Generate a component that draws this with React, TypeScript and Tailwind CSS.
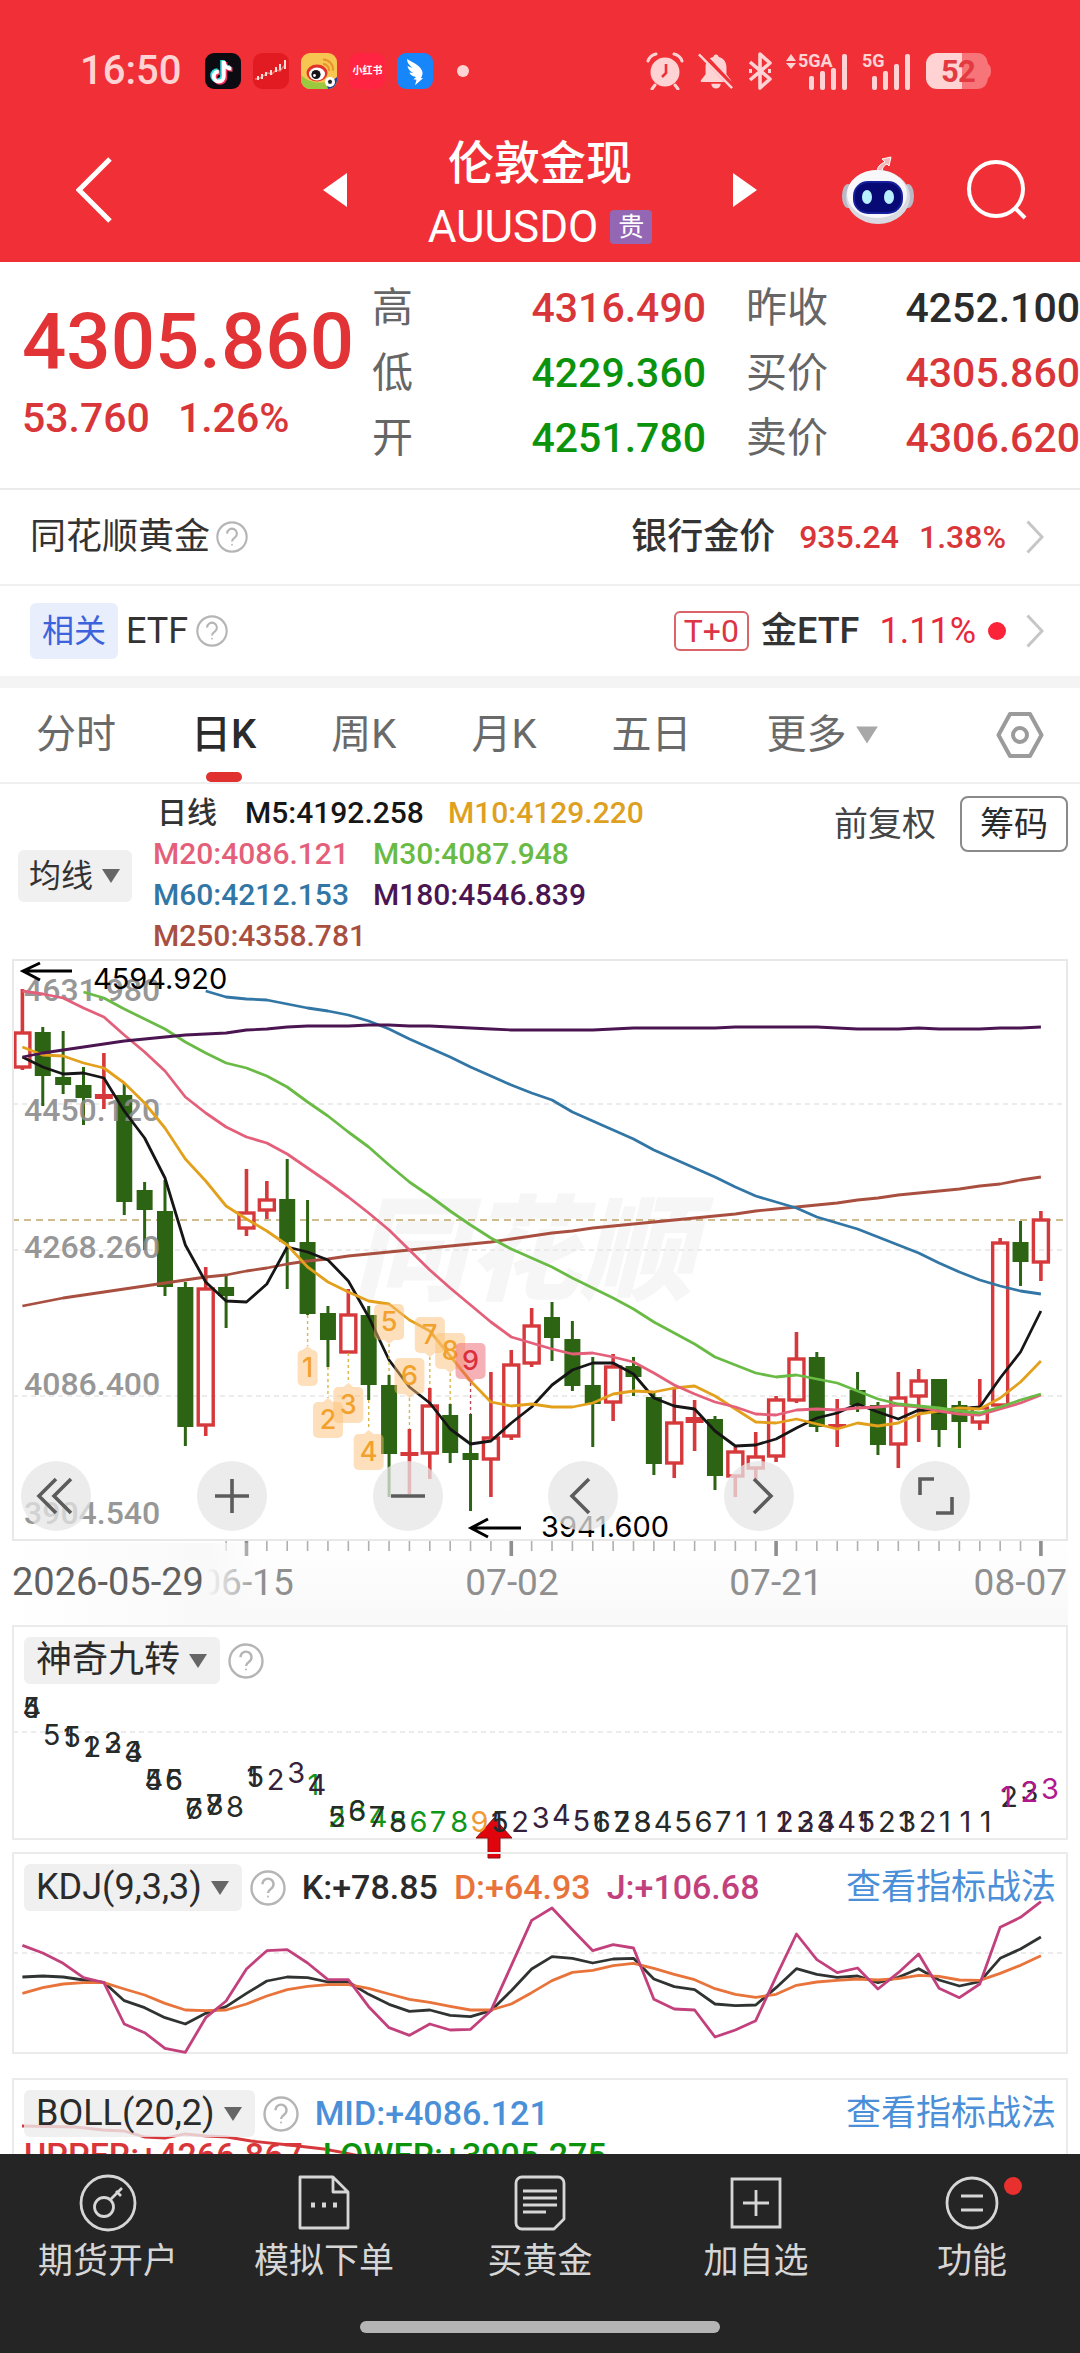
import type { ReactNode } from 'react';

type Candle = [kind: 'up' | 'down', top: number, bottom: number, high: number, low: number];

const UP = '#d6393c';
const DOWN = '#2d6413';
const MUTED = '#8f8f8f';

const QUOTES = [
  { label: '高', value: '4316.490', color: 'text-[#d9363a]' },
  { label: '昨收', value: '4252.100', color: 'text-[#2b2b2b]' },
  { label: '低', value: '4229.360', color: 'text-[#0c930c]' },
  { label: '买价', value: '4305.860', color: 'text-[#d9363a]' },
  { label: '开', value: '4251.780', color: 'text-[#0c930c]' },
  { label: '卖价', value: '4306.620', color: 'text-[#d9363a]' },
];

const TABS = ['分时', '日K', '周K', '月K', '五日', '更多'];

const MA_ROWS = [
  [
    { text: '日线', color: 'px-1 text-[#333333]' },
    { text: 'M5:4192.258', color: 'text-[#161616]' },
    { text: 'M10:4129.220', color: 'text-[#dea11f]' },
  ],
  [
    { text: 'M20:4086.121', color: 'text-[#e4607a]' },
    { text: 'M30:4087.948', color: 'text-[#69bb45]' },
  ],
  [
    { text: 'M60:4212.153', color: 'text-[#3276a6]' },
    { text: 'M180:4546.839', color: 'text-[#4b1551]' },
  ],
  [{ text: 'M250:4358.781', color: 'text-[#a94f40]' }],
];

// Chart drawings share one 1080-wide grid, so every panel lines up on the same x.
const xAt = (i: number) => 22.4 + i * 20.37;

const CANDLES: Candle[] = [
  ['up', 1032, 1068, 989, 1070],
  ['down', 1032, 1076, 1027, 1106],
  ['down', 1077, 1085, 1031, 1094],
  ['down', 1085, 1098, 1067, 1125],
  ['up', 1094, 1099, 1053, 1109],
  ['down', 1095, 1202, 1083, 1215],
  ['down', 1190, 1210, 1182, 1250],
  ['down', 1211, 1287, 1180, 1296],
  ['down', 1287, 1427, 1282, 1446],
  ['up', 1288, 1426, 1267, 1436],
  ['down', 1287, 1296, 1276, 1328],
  ['up', 1212, 1229, 1169, 1236],
  ['up', 1199, 1211, 1181, 1219],
  ['down', 1199, 1242, 1159, 1289],
  ['down', 1242, 1314, 1200, 1315],
  ['down', 1313, 1340, 1306, 1367],
  ['up', 1314, 1353, 1289, 1353],
  ['down', 1315, 1385, 1306, 1400],
  ['down', 1385, 1454, 1375, 1497],
  ['up', 1452, 1456, 1429, 1494],
  ['up', 1405, 1454, 1388, 1479],
  ['down', 1415, 1453, 1404, 1463],
  ['down', 1453, 1460, 1414, 1511],
  ['up', 1437, 1460, 1372, 1497],
  ['up', 1364, 1437, 1350, 1440],
  ['up', 1325, 1364, 1308, 1367],
  ['down', 1317, 1338, 1302, 1361],
  ['down', 1339, 1386, 1321, 1391],
  ['down', 1385, 1404, 1357, 1447],
  ['up', 1366, 1403, 1354, 1421],
  ['down', 1366, 1377, 1357, 1396],
  ['down', 1397, 1464, 1393, 1475],
  ['up', 1422, 1464, 1387, 1478],
  ['up', 1417, 1423, 1400, 1451],
  ['down', 1419, 1476, 1416, 1490],
  ['up', 1451, 1477, 1447, 1497],
  ['up', 1456, 1469, 1432, 1479],
  ['up', 1399, 1457, 1396, 1462],
  ['up', 1358, 1401, 1332, 1403],
  ['down', 1357, 1427, 1352, 1432],
  ['up', 1424, 1427, 1399, 1447],
  ['down', 1390, 1405, 1372, 1412],
  ['down', 1405, 1445, 1402, 1455],
  ['up', 1397, 1445, 1372, 1468],
  ['up', 1380, 1397, 1369, 1442],
  ['down', 1379, 1430, 1379, 1447],
  ['down', 1405, 1422, 1401, 1448],
  ['up', 1407, 1423, 1379, 1430],
  ['up', 1242, 1406, 1238, 1406],
  ['down', 1242, 1262, 1221, 1286],
  ['up', 1219, 1263, 1211, 1281],
];

const M5 = [
  1057, 1067, 1074, 1073, 1078, 1111, 1138, 1178, 1245, 1282, 1301, 1302, 1284, 1247, 1252, 1260, 1281,
  1317, 1360, 1387, 1403, 1429, 1444, 1441, 1423, 1407, 1385, 1370, 1363, 1363, 1374, 1398, 1406, 1409,
  1431, 1446, 1445, 1439, 1428, 1418, 1413, 1404, 1412, 1419, 1410, 1412, 1409, 1407, 1378, 1352, 1311,
];
const M10 = [
  1047, 1055, 1056, 1063, 1068, 1083, 1103, 1128, 1159, 1181, 1206, 1219, 1231, 1245, 1267, 1282, 1292,
  1301, 1304, 1320, 1331, 1356, 1381, 1402, 1406, 1404, 1407, 1407, 1403, 1394, 1391, 1392, 1388, 1386,
  1396, 1409, 1422, 1423, 1419, 1424, 1429, 1423, 1426, 1423, 1414, 1411, 1408, 1409, 1398, 1382, 1361,
];
const M20 = [
  991, 994, 998, 1008, 1017, 1035, 1052, 1071, 1097, 1113, 1127, 1137, 1143, 1154, 1168, 1182, 1197,
  1213, 1230, 1250, 1270, 1288, 1305, 1322, 1337, 1343, 1349, 1354, 1353, 1357, 1362, 1373, 1385, 1394,
  1402, 1407, 1414, 1415, 1410, 1409, 1410, 1408, 1407, 1405, 1407, 1411, 1414, 1415, 1409, 1403, 1395,
];
const M30 = [
  992, 998, 1009, 1019, 1029, 1042, 1053, 1063, 1068, 1076, 1087, 1102, 1116, 1132, 1147, 1165, 1182,
  1196, 1211, 1225, 1238, 1249, 1258, 1267, 1278, 1288, 1298, 1309, 1322, 1333, 1344, 1357, 1365, 1373,
  1377, 1375, 1379, 1383, 1391, 1399, 1404, 1406, 1408, 1411, 1413, 1407, 1400, 1394,
];
const M60 = [
  991, 997, 999, 1000, 1004, 1008, 1011, 1015, 1021, 1029, 1039, 1048, 1057, 1067, 1076, 1085, 1093,
  1100, 1112, 1121, 1130, 1139, 1150, 1159, 1168, 1177, 1187, 1196, 1202, 1208, 1217, 1223, 1229, 1237,
  1245, 1253, 1263, 1272, 1280, 1286, 1291, 1294,
];
const M180 = [
  1057, 1053, 1050, 1047, 1044, 1041, 1039, 1037, 1035, 1034, 1033, 1030, 1029, 1027, 1026, 1026, 1026,
  1025, 1025, 1026, 1026, 1027, 1028, 1029, 1030, 1030, 1030, 1030, 1030, 1029, 1028, 1028, 1028, 1028,
  1028, 1027, 1027, 1027, 1027, 1027, 1028, 1029, 1029, 1029, 1028, 1029, 1029, 1029, 1028, 1028, 1027,
];
const M250 = [
  1306, 1302, 1298, 1295, 1292, 1289, 1286, 1283, 1280, 1277, 1275, 1271, 1268, 1264, 1261, 1259, 1256,
  1254, 1252, 1250, 1248, 1246, 1244, 1242, 1239, 1236, 1233, 1231, 1228, 1226, 1224, 1222, 1220, 1218,
  1216, 1214, 1211, 1209, 1207, 1205, 1203, 1200, 1198, 1195, 1193, 1191, 1189, 1186, 1184, 1180, 1177,
];

const Y_LABELS = [
  { text: '4631.980', y: 1001 },
  { text: '4450.120', y: 1121 },
  { text: '4268.260', y: 1258 },
  { text: '4086.400', y: 1395 },
  { text: '3904.540', y: 1524 },
];

// Nine-turn tags: body top, and the candle end that the dotted leader reaches
const TURN_TAGS = [
  { n: 1, y: 1350, to: 1315, above: false },
  { n: 2, y: 1402, to: 1367, above: false },
  { n: 3, y: 1387, to: 1353, above: false },
  { n: 4, y: 1434, to: 1400, above: false },
  { n: 5, y: 1304, to: 1375, above: true },
  { n: 6, y: 1358, to: 1429, above: true },
  { n: 7, y: 1317, to: 1388, above: true },
  { n: 8, y: 1333, to: 1404, above: true },
  { n: 9, y: 1343, to: 1414, above: true },
];

const INK = '#262b28';
const PLUM = '#35223a';
const GREEN = '#109618';
const PINK = '#b3178f';

// [candle index, baseline, digit, colour]
const NINE_TURNS: [number, number, string, string][] = [
  [0, 1718, '5', INK], [0, 1718, '4', INK],
  [1, 1745, '5', INK],
  [2, 1747, '5', INK], [2, 1747, '1', INK],
  [3, 1757, '1', INK], [3, 1757, '2', INK],
  [4, 1753, '2', INK], [4, 1753, '3', INK],
  [5, 1762, '3', INK], [5, 1762, '4', INK],
  [6, 1790, '4', INK], [6, 1790, '5', INK],
  [7, 1790, '5', INK], [7, 1790, '6', INK],
  [8, 1819, '7', INK], [8, 1819, '6', INK],
  [9, 1815, '7', INK], [9, 1815, '8', INK],
  [10, 1817, '8', INK],
  [11, 1787, '1', PLUM], [11, 1787, '5', INK],
  [12, 1790, '2', PLUM],
  [13, 1783, '3', PLUM],
  [14, 1795, '1', GREEN], [14, 1795, '4', PLUM],
  [15, 1827, '2', GREEN], [15, 1827, '5', INK],
  [16, 1821, '3', GREEN], [16, 1821, '6', INK],
  [17, 1827, '4', GREEN], [17, 1827, '7', INK],
  [18, 1832, '5', GREEN], [18, 1832, '8', INK],
  [19, 1832, '6', GREEN],
  [20, 1832, '7', GREEN],
  [21, 1832, '8', GREEN],
  [22, 1832, '9', '#f09a37'],
  [23, 1832, '1', PLUM], [23, 1832, '5', INK],
  [24, 1832, '2', PLUM],
  [25, 1828, '3', PLUM],
  [26, 1825, '4', PLUM],
  [27, 1831, '5', PLUM],
  [28, 1832, '1', INK], [28, 1832, '6', INK],
  [29, 1832, '2', INK], [29, 1832, '7', INK],
  [30, 1832, '3', INK], [30, 1832, '8', INK],
  [31, 1832, '4', INK],
  [32, 1832, '5', INK],
  [33, 1832, '6', INK],
  [34, 1832, '7', INK],
  [35, 1832, '1', PLUM],
  [36, 1832, '1', INK],
  [37, 1832, '1', PLUM], [37, 1832, '2', PLUM],
  [38, 1832, '2', INK], [38, 1832, '3', PLUM],
  [39, 1832, '3', INK], [39, 1832, '4', PLUM],
  [40, 1832, '4', PLUM],
  [41, 1832, '1', INK], [41, 1832, '5', PLUM],
  [42, 1832, '2', INK],
  [43, 1832, '1', PLUM], [43, 1832, '3', INK],
  [44, 1832, '2', PLUM],
  [45, 1832, '1', INK],
  [46, 1832, '1', PLUM],
  [47, 1832, '1', INK],
  [48, 1807, '2', INK], [48, 1807, '1', PINK],
  [49, 1802, '3', INK], [49, 1802, '2', PINK],
  [50, 1799, '3', PINK],
];

const K_LINE = [
  396, 393, 396, 405, 412, 467, 488, 518, 537, 505, 485, 445, 408, 396, 398, 411, 411, 448, 478, 499, 495,
  511, 515, 497, 437, 372, 335, 340, 354, 342, 340, 402, 425, 434, 477, 482, 480, 428, 371, 388, 397, 393,
  413, 397, 371, 405, 423, 410, 340, 312, 276,
];
const D_LINE = [
  445, 428, 417, 413, 413, 432, 450, 475, 495, 497, 495, 477, 453, 434, 424, 419, 419, 430, 447, 463, 472,
  484, 495, 495, 477, 443, 407, 382, 376, 362, 355, 370, 388, 404, 431, 448, 457, 448, 421, 411, 406, 402,
  405, 401, 391, 394, 405, 406, 385, 361, 332,
];
const J_LINE = [
  301, 324, 355, 398, 413, 537, 563, 610, 622, 518, 468, 372, 317, 314, 354, 404, 404, 485, 548, 571, 537,
  555, 553, 497, 362, 226, 189, 254, 317, 299, 309, 463, 492, 495, 576, 555, 527, 395, 267, 344, 383, 369,
  432, 383, 327, 430, 458, 417, 247, 217, 170,
];

const toPoints = (ys: number[], start = 0) => ys.map((y, i) => `${xAt(i + start)},${y}`).join(' ');
const kdjPoints = (values: number[]) => toPoints(values.map((v) => 1845 + v / 3));

function Line({ ys, color, start = 0 }: { ys: number[]; color: string; start?: number }) {
  return <polyline points={toPoints(ys, start)} fill="none" stroke={color} strokeWidth="2.8" strokeLinejoin="round" />;
}

function HelpIcon({ size }: { size: 'sm' | 'md' }) {
  return (
    <button aria-label="说明" className="shrink-0">
      <svg viewBox="0 0 36 36" className={size === 'sm' ? 'size-8' : 'size-9'} fill="none" stroke="#b5b5b5" strokeWidth="2.4">
        <circle cx="18" cy="18" r="16.5" />
        <path d="M12.5 14.2a5.5 5.5 0 1 1 8.6 4.5c-2 1.4-3.1 2.4-3.1 4.3" />
        <circle cx="18" cy="26.6" r="1" fill="#b5b5b5" stroke="none" />
      </svg>
    </button>
  );
}

function Chevron() {
  return (
    <svg viewBox="0 0 18 34" className="h-[34px] w-[18px] shrink-0" fill="none" stroke="#c6c6c6" strokeWidth="3">
      <path d="M1.5 1.5 16 17 1.5 32.5" />
    </svg>
  );
}

function Caret({ color, large = false }: { color: string; large?: boolean }) {
  return (
    <svg viewBox="0 0 20 16" className={large ? 'h-5 w-6 shrink-0' : 'h-4 w-5 shrink-0'} fill={color}>
      <path d="M1 1h18L10 15z" />
    </svg>
  );
}

function StatusBar() {
  return (
    <div className="flex h-32 items-center pt-3.5 pr-[86px] pl-20 text-[#ffd3d3]">
      <span className="text-[40px] leading-10 font-medium">16:50</span>
      <div className="ml-6 flex items-center gap-3">
        <svg viewBox="0 0 36 36" className="size-9">
          <rect width="36" height="36" rx="9" fill="#0d0b12" />
          <g fill="none" strokeWidth="4.5">
            <path d="M17.5 7v15.500a5 5 0 1 1-5-5M17.500 8c.5 4 3.500 6.500 7.500 6.500" stroke="#35e0e4" />
            <path d="M20 9v15.500a5 5 0 1 1-5-5M20 10c.5 4 3.500 6.500 7.500 6.500" stroke="#f2335c" />
            <path d="M18.800 8v15.500a5 5 0 1 1-5-5M18.800 9c.5 4 3.500 6.500 7.500 6.500" stroke="#ffffff" strokeWidth="3.8" />
          </g>
        </svg>
        <svg viewBox="0 0 36 36" className="size-9" fill="none">
          <rect width="36" height="36" rx="9" fill="#e21b22" />
          <path d="M2 26l5-1 3-2 5-3 4 1 4-4 4 1 5-6" stroke="#f2766f" strokeWidth="1.4" />
          <path d="M5 23v4m4-6v5m4-7v4m5-6v5m5-8v5m4-8v6m5-10v9" stroke="#ffdcd8" strokeWidth="2" />
        </svg>
        <svg viewBox="0 0 36 36" className="size-9">
          <rect width="36" height="36" rx="9" fill="#f6c552" />
          <path d="M0 22c8 8 20 10 36 5a9 9 0 0 1-9 9H9a9 9 0 0 1-9-9z" fill="#9ac93f" />
          <ellipse cx="16" cy="20" rx="10.5" ry="8.5" fill="#e2322b" />
          <ellipse cx="16" cy="21" rx="8" ry="6.5" fill="#ffffff" />
          <circle cx="15" cy="21.5" r="4.6" fill="#161616" />
          <circle cx="13.5" cy="22.5" r="1.4" fill="#ffffff" />
          <path d="M22 11a6 6 0 0 1 6 7M22 6.500a10 10 0 0 1 10 11" fill="none" stroke="#e8912d" strokeWidth="2" />
          <path d="M27 36a9 9 0 0 0 9-9v-3l-10 8z" fill="#1f3fa0" />
          <circle cx="29" cy="29" r="5" fill="#ffffff" />
          <path d="M29 26.500l2.200 1.600-.8 2.600h-2.800l-.8-2.600z" fill="#222222" />
        </svg>
        <span className="flex size-9 items-center justify-center rounded-[9px] bg-[#ff2442] text-[10px] leading-3 font-bold text-white">
          小红书
        </span>
        <svg viewBox="0 0 36 36" className="size-9">
          <rect width="36" height="36" rx="9" fill="#1786fb" />
          <path d="M10 6c7 4 14 7 15.500 13 .3 2-.5 4-1.500 6l2 .2-8 7 1.500-5.500-3-.4 2.500-2.300c-4-.6-6-2.500-6.500-4.500l4 .6c-3.500-1.600-5.500-4-6-7l5 2C12 12 10 9.500 10 6z" fill="#ffffff" />
        </svg>
        <span className="ml-3 size-3 rounded-full bg-[#ffd3d3]" />
      </div>
      <div className="ml-auto flex items-center gap-3.5">
        <svg viewBox="0 0 38 38" className="size-[38px]" fill="none">
          <circle cx="19" cy="20" r="14.5" fill="#ffd3d3" />
          <path d="M2 9a11 11 0 0 1 8-7M36 9a11 11 0 0 0-8-7M9 33l-3 4M29 33l3 4" stroke="#ffd3d3" strokeWidth="3" strokeLinecap="round" />
          <path d="M20 12v9l-4 4" stroke="#f03036" strokeWidth="2.6" />
        </svg>
        <svg viewBox="0 0 38 38" className="size-9" fill="#ffd3d3">
          <path d="M19 1.500c1.600 0 2.600 1 2.800 2.600 5 1.200 8.200 5.400 8.200 10.400v8l5 6.500v1.500H3V29l5-6.500v-8c0-5 3.200-9.200 8.200-10.400.2-1.600 1.200-2.600 2.800-2.600zM14 32.500h10a5 5 0 0 1-10 0z" />
          <path d="M3 0 37 36" stroke="#f03036" strokeWidth="6" />
          <path d="M1 1.500 36 37" stroke="#ffd3d3" strokeWidth="2.6" />
        </svg>
        <svg viewBox="0 0 24 38" className="h-[38px] w-6" fill="none" stroke="#ffd3d3" strokeWidth="3.6">
          <path d="M2 10l20 17-10 9V2l10 9L2 28" strokeLinejoin="round" />
          <path d="M1 19h3M20 19h3" strokeWidth="4" />
        </svg>
        <svg viewBox="0 0 62 38" className="h-[38px] w-[62px]" fill="#ffd3d3">
          <path d="M0 9l5-7 5 7zM0 11l5 6 5-6z" />
          <text x="12" y="15" fontSize="18" fontWeight="700">5GA</text>
          <rect x="23" y="24" width="5" height="14" rx="2" />
          <rect x="34" y="19" width="5" height="19" rx="2" />
          <rect x="45" y="16" width="5" height="22" rx="2" />
          <rect x="56" y="2" width="5" height="36" rx="2" />
        </svg>
        <svg viewBox="0 0 50 38" className="h-[38px] w-[50px]" fill="#ffd3d3">
          <text x="0" y="15" fontSize="18" fontWeight="700">5G</text>
          <rect x="10" y="24" width="5" height="14" rx="2" />
          <rect x="21" y="19" width="5" height="19" rx="2" />
          <rect x="32" y="12" width="5" height="26" rx="2" />
          <rect x="43" y="2" width="5" height="36" rx="2" />
        </svg>
        <svg viewBox="0 0 68 36" className="h-9 w-[68px]">
          <path d="M11 0h25v36H11A11 11 0 0 1 0 25V11A11 11 0 0 1 11 0z" fill="#ffd3d3" />
          <path d="M36 0h15c7 0 10 4 11 11 4 2 4 12 0 14-1 7-4 11-11 11H36z" fill="#f77478" />
          <text x="15" y="29" fontSize="31" fontWeight="700" fill="#e23a40">5</text>
          <text x="32" y="29" fontSize="31" fontWeight="700" fill="#e23a40">2</text>
        </svg>
      </div>
    </div>
  );
}

function Header() {
  return (
    <header className="bg-[#f03036] text-white">
      <StatusBar />
      <div className="grid h-[134px] grid-cols-[1fr_434px_1fr] items-center">
        <div className="mb-2.5 flex pl-[76px]">
          <button aria-label="返回">
            <svg viewBox="0 0 36 66" className="h-[66px] w-9" fill="none" stroke="#ffffff" strokeWidth="5">
              <path d="M34 2 3 33l31 31" />
            </svg>
          </button>
        </div>
        <div className="flex items-center justify-between">
          <button aria-label="上一个" className="mb-2.5">
            <svg viewBox="0 0 24 34" className="h-[34px] w-6" fill="#ffffff">
              <path d="M24 0v34L0 17z" />
            </svg>
          </button>
          <div className="flex flex-col items-center">
            <h1 className="text-[46px] leading-[64px] font-medium">伦敦金现</h1>
            <div className="flex items-center gap-3 text-[44px] leading-[64px]">
              AUUSDO
              <span className="flex h-[34px] w-[42px] items-center justify-center rounded-sm bg-[#9467b5] text-[26px] leading-8">
                贵
              </span>
            </div>
          </div>
          <button aria-label="下一个" className="mb-2.5">
            <svg viewBox="0 0 24 34" className="h-[34px] w-6" fill="#ffffff">
              <path d="M0 0v34l24-17z" />
            </svg>
          </button>
        </div>
        <div className="mb-2.5 flex items-center justify-end gap-[52px] pr-[53px]">
          <button aria-label="智能助手">
            <svg viewBox="0 0 74 68" className="h-[68px] w-[74px]">
              <path d="M36 17c0-6 3-9 8-11l-3-3 9-2-2 9-2-2c-4 2-5 5-5 9z" fill="#f2b9ba" stroke="#ffffff" strokeWidth="1" />
              <ellipse cx="7" cy="40" rx="6" ry="12" fill="#b9bac6" />
              <ellipse cx="67" cy="40" rx="6" ry="12" fill="#b9bac6" />
              <ellipse cx="37" cy="41" rx="32" ry="27" fill="#d9d9e2" />
              <ellipse cx="36" cy="38" rx="30" ry="24" fill="#f8f8fb" />
              <rect x="12" y="25" width="50" height="33" rx="15" fill="#16209c" />
              <rect x="14" y="27" width="46" height="29" rx="13" fill="#070a74" />
              <ellipse cx="26" cy="41" rx="5" ry="7" fill="#b9f0ff" />
              <ellipse cx="48" cy="41" rx="5" ry="7" fill="#b9f0ff" />
            </svg>
          </button>
          <button aria-label="搜索">
            <svg viewBox="0 0 60 60" className="size-[60px]" fill="none" stroke="#ffffff" strokeWidth="4">
              <circle cx="29" cy="29" r="27" />
              <path d="M48 48l10 10" />
            </svg>
          </button>
        </div>
      </div>
    </header>
  );
}

function Quote() {
  return (
    <section className="flex h-[228px] border-b-2 border-[#ebebeb] pt-3.5">
      <div className="w-[372px] shrink-0 pt-5 pl-[22px] text-[#e23436]">
        <p className="text-[78px] leading-[92px] font-medium">4305.860</p>
        <p className="flex gap-7 text-[41px] leading-[60px] font-medium text-[#d9363a]">
          <span>53.760</span>
          <span>1.26%</span>
        </p>
      </div>
      <dl className="grid flex-1 auto-rows-[65px] grid-cols-2 gap-x-10">
        {QUOTES.map((q) => (
          <div key={q.label} className="flex items-center justify-between text-[41px] leading-[65px]">
            <dt className="text-[#666666]">{q.label}</dt>
            <dd className={`font-medium ${q.color}`}>{q.value}</dd>
          </div>
        ))}
      </dl>
    </section>
  );
}

function RelatedRows() {
  return (
    <section className="text-[36px] leading-10 text-[#333333]">
      <div className="flex h-24 items-center border-b-2 border-[#f0f0f0] pr-9 pl-[30px]">
        <span>同花顺黄金</span>
        <span className="ml-1.5 flex">
          <HelpIcon size="sm" />
        </span>
        <a href="#bank" className="ml-auto flex items-center font-medium">
          银行金价
          <span className="ml-6 text-[32px] text-[#d9363a]">935.24</span>
          <span className="mr-5 ml-5 text-[32px] text-[#d9363a]">1.38%</span>
          <Chevron />
        </a>
      </div>
      <div className="flex h-[90px] items-center pr-9 pl-[30px]">
        <span className="flex h-14 items-center rounded-md bg-[#e8eefc] px-3 text-[32px] text-[#3c63dc]">相关</span>
        <span className="ml-2">ETF</span>
        <span className="ml-2 flex">
          <HelpIcon size="sm" />
        </span>
        <a href="#etf" className="ml-auto flex items-center">
          <span className="flex h-10 items-center rounded-md border-2 border-[#d9646a] px-2 text-[32px] text-[#dc3545]">T+0</span>
          <span className="ml-3 font-medium">金ETF</span>
          <span className="ml-5 text-[#e8283c]">1.11%</span>
          <span className="mr-5 ml-3 size-[18px] rounded-full bg-[#fb2438]" />
          <Chevron />
        </a>
      </div>
    </section>
  );
}

function PeriodTabs() {
  return (
    <nav className="flex h-24 items-center gap-[75px] border-b-2 border-[#efefef] pr-9 pl-9 text-[40px] leading-[52px] text-[#6a6a6a]">
      {TABS.map((tab) => (
        <button
          key={tab}
          className={
            tab === '日K'
              ? 'relative flex h-full items-center font-medium text-[#2b2b2b]'
              : 'flex h-full items-center gap-2'
          }
        >
          {tab}
          {tab === '更多' && <Caret color="#a8a8a8" large />}
          {tab === '日K' && (
            <span className="absolute bottom-0 left-1/2 h-2.5 w-9 -translate-x-1/2 rounded-full bg-[#e03030]" />
          )}
        </button>
      ))}
      <button aria-label="设置" className="ml-auto">
        <svg viewBox="0 0 48 48" className="size-12" fill="none" stroke="#9b9b9b" strokeWidth="4">
          <path d="M14 3h20l11.5 21L34 45H14L2.5 24z" strokeLinejoin="round" />
          <circle cx="24" cy="24" r="7" />
        </svg>
      </button>
    </nav>
  );
}

function AverageBar() {
  return (
    <section className="flex h-[175px] pt-2 pr-3 pl-[18px]">
      <button className="flex h-[52px] w-[114px] items-center justify-center gap-2 self-center rounded-md bg-[#f0f0f0] text-[32px] leading-9 text-[#333333]">
        均线
        <Caret color="#666666" />
      </button>
      <div className="ml-[21px] flex flex-col text-[30px] leading-[41px] font-medium">
        {MA_ROWS.map((row) => (
          <div key={row[0].text} className="flex gap-6">
            {row.map((item) => (
              <span key={item.text} className={item.color}>
                {item.text}
              </span>
            ))}
          </div>
        ))}
      </div>
      <div className="ml-auto flex h-16 items-center gap-6 text-[34px] leading-10 text-[#444444]">
        <span>前复权</span>
        <button className="h-14 w-[108px] rounded-lg border-2 border-[#8a8a8a] text-[#2b2b2b]">筹码</button>
      </div>
    </section>
  );
}

function CandleStick({ candle, x }: { candle: Candle; x: number }) {
  const [kind, top, bottom, high, low] = candle;
  if (kind === 'down') {
    return (
      <g fill={DOWN}>
        <rect x={x - 1.5} y={high} width="3" height={low - high} />
        <rect x={x - 8} y={top} width="16" height={bottom - top} />
      </g>
    );
  }
  if (bottom - top < 8) {
    return (
      <g fill={UP}>
        <rect x={x - 1.8} y={high} width="3.6" height={low - high} />
        <rect x={x - 9} y={top} width="18" height={bottom - top} />
      </g>
    );
  }
  return (
    <g fill={UP}>
      <rect x={x - 1.8} y={high} width="3.6" height={top - high} />
      <rect x={x - 1.8} y={bottom} width="3.6" height={low - bottom} />
      <rect x={x - 7.5} y={top + 1} width="15" height={bottom - top - 2} fill="none" stroke={UP} strokeWidth="3.4" />
    </g>
  );
}

function TurnTag({ n, y, to, above }: (typeof TURN_TAGS)[0]) {
  const x = xAt(13 + n);
  const half = n === 1 ? 10 : 15;
  const color = n === 9 ? '#ee5d68' : '#fbbf72';
  return (
    <g>
      <line x1={x} x2={x} y1={above ? y + 40 : to} y2={above ? to : y - 4} stroke={n === 9 ? '#b84a5a' : '#d9b64a'} strokeWidth="1.4" strokeDasharray="3 3" />
      <g fill={color} opacity="0.48">
        <rect x={x - half} y={y} width={half * 2} height="36" rx="5" />
        <path d={above ? `M${x - 5} ${y + 36}h10l-5 4z` : `M${x - 5} ${y}h10l-5-4z`} />
      </g>
      <text x={x} y={y + 27} textAnchor="middle" fontSize="27" fontWeight="500" fill={n === 9 ? '#dc2f3c' : '#f2a12c'} className="font-['Inter',sans-serif]">
        {n}
      </text>
    </g>
  );
}

function MainChart() {
  return (
    <svg viewBox="12 959 1056 666" className="block w-full">
      <defs>
        <linearGradient id="axisFade" x1="0" x2="1" y1="0" y2="0">
          <stop offset="0" stopColor="#ffffff" />
          <stop offset="0.78" stopColor="#f9f9f9" />
          <stop offset="1" stopColor="#f9f9f9" stopOpacity="0" />
        </linearGradient>
        <linearGradient id="axisBg" x1="0" x2="0" y1="0" y2="1">
          <stop offset="0" stopColor="#ffffff" />
          <stop offset="1" stopColor="#f8f8f8" />
        </linearGradient>
      </defs>

      <text x="352" y="1291" fontSize="114" fontWeight="900" fontStyle="italic" fill="#f6f6f6">同花顺</text>

      <g stroke="#e6e6e6" strokeWidth="1.5" strokeDasharray="5 4">
        <path d="M13 1104H1067M13 1250H1067M13 1396H1067" />
      </g>
      <path d="M12 1220H1067" stroke="#bfa76a" strokeWidth="1.6" strokeDasharray="7 5" />

      {CANDLES.map((candle, i) => (
        <CandleStick key={i} candle={candle} x={xAt(i)} />
      ))}

      <g fontSize="32" fontWeight="500" fill="#8c8c8c" opacity="0.9">
        {Y_LABELS.map((label) => (
          <text key={label.text} x="24" y={label.y}>{label.text}</text>
        ))}
      </g>

      <Line ys={M250} color="#a94f40" />
      <Line ys={M60} color="#3276a6" start={9} />
      <Line ys={M5} color="#161616" />
      <Line ys={M10} color="#e3a01c" />
      <Line ys={M20} color="#e4607a" />
      <Line ys={M30} color="#69bb45" start={3} />
      <Line ys={M180} color="#4b1551" />

      {TURN_TAGS.map((tag) => (
        <TurnTag key={tag.n} {...tag} />
      ))}

      <g fill="none" stroke="#000000" strokeWidth="3">
        <path d="M72 971H23M40 963l-17 8 17 9" />
        <path d="M521 1528h-50M488 1519l-17 9 17 9" />
      </g>
      <g fontSize="29" fill="#000000" className="font-['Inter',sans-serif]">
        <text x="93" y="989">4594.920</text>
        <text x="541" y="1537">3941.600</text>
      </g>

      <rect x="12" y="1541" width="1056" height="84" fill="url(#axisBg)" />
      {CANDLES.map((_, i) => {
        if (i < 10) return null;
        const major = (i - 11) % 13 === 0;
        return (
          <rect key={i} x={xAt(i) - (major ? 1.8 : 0.8)} y="1541" width={major ? 3.6 : 1.6} height={major ? 15 : 10} fill={major ? '#8f8f8f' : '#b0b0b0'} />
        );
      })}
      <g fontSize="37" fill={MUTED} textAnchor="middle">
        <text x="247" y="1595">06-15</text>
        <text x="512" y="1595">07-02</text>
        <text x="776" y="1595">07-21</text>
        <text x="1067" y="1595" textAnchor="end">08-07</text>
      </g>
      <rect x="12" y="1543" width="250" height="82" fill="url(#axisFade)" />
      <text x="12" y="1595" fontSize="38" fill="#606060">2026-05-29</text>
      <rect x="13" y="960" width="1054" height="580" fill="none" stroke="#e8e8e8" strokeWidth="2" />
    </svg>
  );
}

const CONTROLS: { label: string; icon: ReactNode }[] = [
  { label: '最早', icon: <path d="M35 18 18 35l17 17M50 18 33 35l17 17" /> },
  { label: '放大', icon: <path d="M35 18v34M18 35h34" /> },
  { label: '缩小', icon: <path d="M18 35h34" /> },
  { label: '左移', icon: <path d="M41 18 24 35l17 17" /> },
  { label: '右移', icon: <path d="M30 18l17 17-17 17" /> },
  { label: '全屏', icon: <path d="M34 18H20v16M36 52h16V36" /> },
];

function ChartControls() {
  return (
    <div className="absolute right-[98px] bottom-[94px] left-[9px] flex justify-between">
      {CONTROLS.map((control) => (
        <button key={control.label} aria-label={control.label} className="size-[70px] rounded-full bg-[#e6e6e6]/75">
          <svg viewBox="0 0 70 70" className="size-[70px]" fill="none" stroke="#5c5c5c" strokeWidth="3.6">
            {control.icon}
          </svg>
        </button>
      ))}
    </div>
  );
}

function IndicatorChip({ name }: { name: string }) {
  return (
    <button className="flex h-[47px] shrink-0 items-center gap-2 rounded-md bg-[#ececec]/80 px-3 text-[36px] leading-[47px] font-normal text-[#2b2b2b]">
      {name}
      <Caret color="#666666" />
    </button>
  );
}

// The chart and its header share one grid cell, header on top
function Panel({ viewBox, drawing, children }: { viewBox: string; drawing: ReactNode; children: ReactNode }) {
  return (
    <section className="grid">
      <svg viewBox={viewBox} className="col-start-1 row-start-1 block w-full overflow-visible">
        {drawing}
      </svg>
      <div className="z-10 col-start-1 row-start-1 self-start pt-3 pr-3 pl-3">{children}</div>
    </section>
  );
}

function NineTurnPanel() {
  return (
    <Panel
      viewBox="12 1625 1056 215"
      drawing={
        <>
          <rect x="13" y="1626" width="1054" height="213" fill="none" stroke="#ebebeb" strokeWidth="2" />
          <path d="M13 1732H1067" stroke="#e6e6e6" strokeWidth="1.5" strokeDasharray="5 4" />
          <path d="M494 1818l18 20h-12v20h-12v-20h-12z" fill="#e0040c" stroke="#8d1010" strokeWidth="1" />
          <g fontSize="29" className="font-['Inter',sans-serif]">
            {NINE_TURNS.map(([i, y, digit, color], k) => (
              <text key={k} x={xAt(i)} y={y} fill={color}>{digit}</text>
            ))}
          </g>
        </>
      }
    >
      <div className="flex items-center gap-2">
        <IndicatorChip name="神奇九转" />
        <HelpIcon size="md" />
      </div>
    </Panel>
  );
}

function KdjPanel() {
  return (
    <Panel
      viewBox="12 1852 1056 202"
      drawing={
        <>
          <rect x="13" y="1853" width="1054" height="200" fill="none" stroke="#ebebeb" strokeWidth="2" />
          <path d="M13 1953H1067" stroke="#e6e6e6" strokeWidth="1.5" strokeDasharray="5 4" />
          <g fill="none" strokeWidth="2.8" strokeLinejoin="round">
            <polyline points={kdjPoints(K_LINE)} stroke="#2f3331" />
            <polyline points={kdjPoints(D_LINE)} stroke="#e8743b" />
            <polyline points={kdjPoints(J_LINE)} stroke="#c2417c" />
          </g>
        </>
      }
    >
      <div className="flex items-center gap-2 text-[34px] leading-[47px] font-medium">
        <IndicatorChip name="KDJ(9,3,3)" />
        <HelpIcon size="md" />
        <div className="ml-2 flex gap-4">
          <span className="text-[#2b2b2b]">K:+78.85</span>
          <span className="text-[#e8743b]">D:+64.93</span>
          <span className="text-[#c2417c]">J:+106.68</span>
        </div>
        <a href="#kdj" className="ml-auto text-[35px] font-normal text-[#4a8fd8]">查看指标战法</a>
      </div>
    </Panel>
  );
}

function BollPanel() {
  return (
    <Panel
      viewBox="12 2079 1056 200"
      drawing={
        <>
          <rect x="13" y="2080" width="1054" height="198" fill="none" stroke="#ebebeb" strokeWidth="2" />
          <path
            d="M22 2127l54 1 27 3 21 1 21 6 20 1 20-4 22 2 20 1 24 4 38 4 35 4 21 4 60 12"
            fill="none"
            stroke="#d6393c"
            strokeWidth="2.8"
          />
        </>
      }
    >
      <div className="flex items-center gap-2 text-[34px] leading-[47px] font-medium">
        <IndicatorChip name="BOLL(20,2)" />
        <HelpIcon size="md" />
        <span className="ml-2 text-[#4a8fd8]">MID:+4086.121</span>
        <a href="#boll" className="ml-auto text-[35px] font-normal text-[#4a8fd8]">查看指标战法</a>
      </div>
      <div className="flex gap-5 text-[34px] leading-9 font-medium">
        <span className="text-[#d9363a]">UPPER:+4266.867</span>
        <span className="text-[#0c930c]">LOWER:+3905.275</span>
      </div>
    </Panel>
  );
}

const ACTIONS: { label: string; icon: ReactNode }[] = [
  {
    label: '期货开户',
    icon: (
      <>
        <circle cx="30" cy="30" r="27" />
        <circle cx="26" cy="34" r="9.5" />
        <path d="M32 27l12-12M38 18l5 5" />
      </>
    ),
  },
  {
    label: '模拟下单',
    icon: (
      <>
        <path d="M6 4h33l15 15v36H6zM39 4v15h15" strokeLinejoin="round" />
        <path d="M17 32h4M28 32h4M39 32h4" strokeWidth="5" />
      </>
    ),
  },
  {
    label: '买黄金',
    icon: (
      <>
        <path d="M12 4h36a6 6 0 0 1 6 6v36L44 56H12a6 6 0 0 1-6-6V10a6 6 0 0 1 6-6z" strokeLinejoin="round" />
        <path d="M13 18h34M13 25h34M13 32h34M13 39h23" />
      </>
    ),
  },
  {
    label: '加自选',
    icon: (
      <>
        <path d="M6 6h48v48H6z" />
        <path d="M30 17v26M17 30h26" />
      </>
    ),
  },
  {
    label: '功能',
    icon: (
      <>
        <circle cx="30" cy="30" r="25" />
        <path d="M19 23h22M19 37h22" />
      </>
    ),
  },
];

function ActionBar() {
  return (
    <footer className="shrink-0 bg-[#252525] text-[#d6d6d6]">
      <nav className="grid h-[167px] grid-cols-5 pt-[19px]">
        {ACTIONS.map((action) => (
          <button key={action.label} className="flex flex-col items-center gap-1.5">
            <span className="relative">
              <svg viewBox="0 0 60 60" className="size-[60px]" fill="none" stroke="currentColor" strokeWidth="2.8">
                {action.icon}
              </svg>
              {action.label === '功能' && (
                <span className="absolute top-1 -right-5 size-[18px] rounded-full bg-[#e8302e]" />
              )}
            </span>
            <span className="text-[35px] leading-[46px]">{action.label}</span>
          </button>
        ))}
      </nav>
      <div className="flex h-8 justify-center">
        <span className="h-3 w-1/3 rounded-full bg-[#b5b5b5]" />
      </div>
    </footer>
  );
}

export default function App() {
  return (
    <div className="flex h-screen flex-col bg-white font-['Roboto','Noto_Sans_CJK_SC',sans-serif]">
      <main className="min-h-0 flex-1 overflow-y-auto [scrollbar-width:none]">
        <Header />
        <Quote />
        <RelatedRows />
        <div className="h-3 bg-[#f4f4f4]" />
        <PeriodTabs />
        <AverageBar />
        <div className="mx-3">
          <div className="relative">
            <MainChart />
            <ChartControls />
          </div>
          <NineTurnPanel />
          <div className="mt-3">
            <KdjPanel />
          </div>
          <div className="mt-6">
            <BollPanel />
          </div>
        </div>
      </main>
      <ActionBar />
    </div>
  );
}
